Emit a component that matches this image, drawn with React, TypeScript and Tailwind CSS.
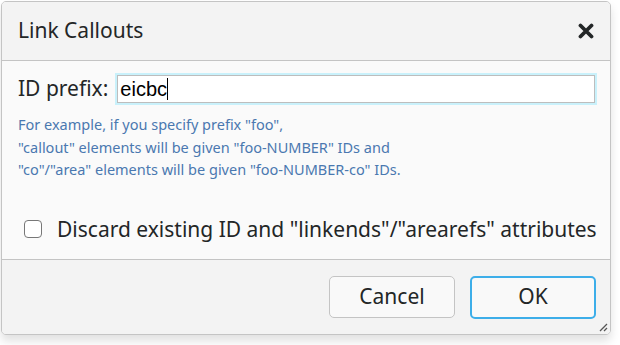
import React from 'react';

const CloseIcon = () => (
  <svg width="16" height="16" viewBox="0 0 16 16" className="text-[#232627]">
    <path d="M2.5 2.5 L13.5 13.5 M13.5 2.5 L2.5 13.5" stroke="currentColor" strokeWidth="3.8" strokeLinecap="round" />
  </svg>
);

const Grip = () => (
  <svg width="12" height="12" viewBox="0 0 12 12" className="text-[#555]">
    <path d="M4 11 L11 4 M8 11 L11 8" stroke="currentColor" strokeWidth="1.3" />
  </svg>
);

export default function App() {
  return (
    <div className="w-[620px] h-[345px] bg-white pl-px pt-px font-['Noto_Sans',sans-serif]">
      <div className="relative w-[610px] h-[334px] flex flex-col border border-[#c4c4c4] rounded-[5px] bg-[#fafafa] shadow-[0_6px_10px_rgba(0,0,0,0.12)] overflow-hidden">
        <div className="h-[59px] shrink-0 flex items-center justify-between pl-[16px] pr-[16px] bg-[#f3f3f3] border-b border-[#c4c4c4]">
          <span className="text-[21px] text-[#232627]">Link Callouts</span>
          <CloseIcon />
        </div>

        <div className="flex-1 flex flex-col pl-[16px] pr-[13px] pt-[12px]">
          <div className="flex items-center gap-[7px]">
            <span className="text-[21px] text-[#232627]">ID prefix:</span>
            <div className="flex-1 p-[2px] bg-[#c9f1fb]">
              <div className="h-[28px] flex items-center bg-white border border-[#bdbdbd] px-[2px] font-['Liberation_Sans',sans-serif] text-[20px] text-black">
                eicbc<span className="inline-block w-px h-[22px] bg-black" />
              </div>
            </div>
          </div>
          <div className="mt-[8px] text-[14.5px] leading-[22.5px] text-[#4a78b0]">
            <div>For example, if you specify prefix "foo",</div>
            <div>"callout" elements will be given "foo-NUMBER" IDs and</div>
            <div>"co"/"area" elements will be given "foo-NUMBER-co" IDs.</div>
          </div>
          <label className="mt-[33px] flex items-center gap-[15px] pl-[6px]">
            <span className="w-[18px] h-[18px] rounded-[4px] border border-[#777] bg-white" />
            <span className="text-[21px] text-[#232627]">Discard existing ID and "linkends"/"arearefs" attributes</span>
          </label>
        </div>

        <div className="h-[75px] shrink-0 flex items-center justify-end gap-[15px] pr-[14px] bg-[#f3f3f3] border-t border-[#c4c4c4]">
          <button className="w-[126px] h-[42px] rounded-[5px] border border-[#c4c4c4] bg-[#f9f9f9] text-[21px] text-[#232627]">Cancel</button>
          <button className="w-[126px] h-[43px] rounded-[5px] border-2 border-[#3daee9] bg-[#f9f9f9] text-[21px] text-[#232627]">OK</button>
          <div className="absolute right-[2px] bottom-[2px]">
            <Grip />
          </div>
        </div>
      </div>
    </div>
  );
}
